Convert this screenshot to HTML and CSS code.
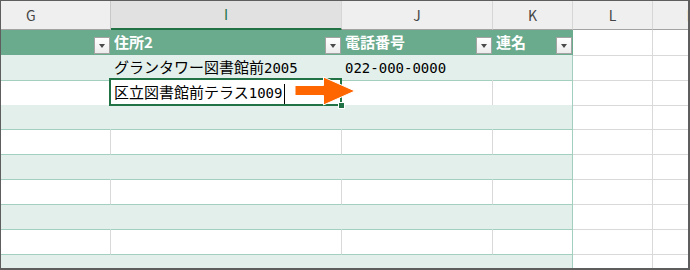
FILE: index.html
```html
<!DOCTYPE html>
<html lang="ja">
<head>
<meta charset="utf-8">
<link rel="stylesheet" href="styles.css">
</head>
<body>
<div class="sheet">
  <div class="row colhead">
    <div class="ch g">G</div>
    <div class="ch sel">I</div>
    <div class="ch">J</div>
    <div class="ch">K</div>
    <div class="ch">L</div>
    <div class="ch">M</div>
  </div>
  <div class="row thead">
    <div class="c t"><span class="flt"></span></div>
    <div class="c t"><span class="lbl">住所2</span><span class="flt"></span></div>
    <div class="c t"><span class="lbl">電話番号</span><span class="flt"></span></div>
    <div class="c t edge"><span class="lbl">連名</span><span class="flt"></span></div>
    <div class="c"></div>
    <div class="c"></div>
  </div>
  <div class="row band">
    <div class="c t"></div>
    <div class="c t">グランタワー図書館前<span class="num">2005</span></div>
    <div class="c t"><span class="num">022-000-0000</span></div>
    <div class="c t edge"></div>
    <div class="c"></div>
    <div class="c"></div>
  </div>
  <div class="row plain">
    <div class="c t"></div>
    <div class="c t edit">区立図書館前テラス<span class="num">1009</span><span class="caret"></span><span class="handle"></span></div>
    <div class="c t"></div>
    <div class="c t edge"></div>
    <div class="c"></div>
    <div class="c"></div>
  </div>
  <div class="row band">
    <div class="c t"></div><div class="c t"></div><div class="c t"></div><div class="c t edge"></div><div class="c"></div><div class="c"></div>
  </div>
  <div class="row plain">
    <div class="c t"></div><div class="c t"></div><div class="c t"></div><div class="c t edge"></div><div class="c"></div><div class="c"></div>
  </div>
  <div class="row band">
    <div class="c t"></div><div class="c t"></div><div class="c t"></div><div class="c t edge"></div><div class="c"></div><div class="c"></div>
  </div>
  <div class="row plain">
    <div class="c t"></div><div class="c t"></div><div class="c t"></div><div class="c t edge"></div><div class="c"></div><div class="c"></div>
  </div>
  <div class="row band">
    <div class="c t"></div><div class="c t"></div><div class="c t"></div><div class="c t edge"></div><div class="c"></div><div class="c"></div>
  </div>
  <div class="row plain">
    <div class="c t"></div><div class="c t"></div><div class="c t"></div><div class="c t edge"></div><div class="c"></div><div class="c"></div>
  </div>
  <div class="row band">
    <div class="c t"></div><div class="c t"></div><div class="c t"></div><div class="c t edge"></div><div class="c"></div><div class="c"></div>
  </div>
  <svg class="arrow" width="66" height="33" viewBox="0 0 66 33">
    <path d="M2 10.5 H30.5 V2 L62 16 L30.5 30 V20.5 H2 Z" fill="#ff6600" stroke="#ffffff" stroke-width="1" stroke-linejoin="miter"/>
  </svg>
</div>
</body>
</html>
```

FILE: styles.css
```css
body {
  margin: 0;
  background: #ffffff;
}

.sheet {
  position: relative;
  width: 690px;
  height: 270px;
  box-sizing: border-box;
  border: 1px solid #5e5e5e;
  border-right-width: 2px;
  border-bottom-width: 2px;
  overflow: hidden;
  font-family: "Noto Sans CJK JP", sans-serif;
  background: #ffffff;
}

.row {
  display: grid;
  grid-template-columns: 110px 231px 151px 80px 80px 80px;
  height: 25px;
}

.row.colhead {
  height: 29px;
}

.ch {
  box-sizing: border-box;
  background: #efefef;
  border-right: 1px solid #d6d6d6;
  border-bottom: 1px solid #a3a3a3;
  text-align: center;
  font-size: 14px;
  line-height: 28px;
  color: #444444;
}

.ch.g {
  text-align: left;
  padding-left: 25px;
  border-right-color: #c8c8c8;
}

.ch.sel {
  background: #e1e1e1;
  border-bottom: 2px solid #217346;
  line-height: 27px;
  color: #217346;
}

.c {
  box-sizing: border-box;
  border-right: 1px solid #d9d9d9;
  border-bottom: 1px solid #d9d9d9;
  font-size: 15px;
  line-height: 24px;
  padding-left: 3px;
  white-space: nowrap;
  color: #000000;
}

.t {
  border-bottom-color: #a2cfbe;
}

.band .t {
  background: #e2efea;
  border-right-color: #e2efea;
}

.t.edge {
  border-right-color: #a2cfbe;
}

.thead .t {
  background: #6aaa8d;
  border-right-color: #6aaa8d;
  border-bottom-color: #6aaa8d;
  display: flex;
  align-items: flex-end;
  padding: 0 0 1px 3px;
}

.lbl {
  align-self: center;
  color: #ffffff;
  font-weight: bold;
  font-size: 15px;
  line-height: 24px;
}

.flt {
  position: relative;
  flex: none;
  width: 16px;
  height: 17px;
  box-sizing: border-box;
  margin-left: auto;
  border: 1px solid #a3a3a3;
  background: linear-gradient(#ffffff, #ececec);
}

.flt::after {
  content: "";
  position: absolute;
  left: 4px;
  top: 6px;
  border-top: 4px solid #4a4a4a;
  border-left: 3px solid transparent;
  border-right: 3px solid transparent;
}

.num {
  font-family: "DejaVu Sans Mono", monospace;
  font-size: 14px;
}

.edit {
  position: relative;
  background: #ffffff;
}

.edit::after {
  content: "";
  position: absolute;
  left: -2px;
  top: -2px;
  right: -1px;
  bottom: -1px;
  border: 2px solid #217346;
}

.caret {
  display: inline-block;
  width: 1px;
  height: 20px;
  margin-left: 2px;
  background: #000000;
  vertical-align: middle;
}

.handle {
  position: absolute;
  right: -3px;
  bottom: -3px;
  width: 5px;
  height: 5px;
  background: #217346;
  box-shadow: 0 0 0 1px #ffffff;
  z-index: 2;
}

.arrow {
  position: absolute;
  left: 292px;
  top: 74px;
  z-index: 3;
}
```
